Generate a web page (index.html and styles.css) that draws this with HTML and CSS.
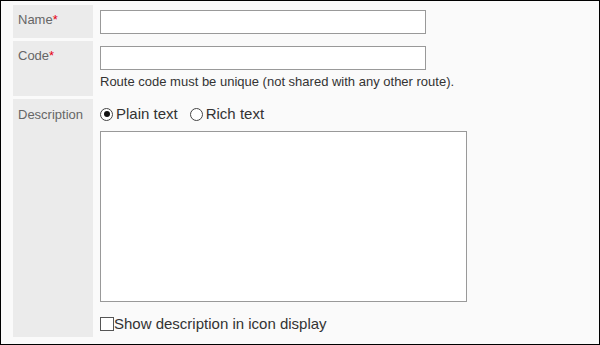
FILE: index.html
```html
<!DOCTYPE html>
<html>
<head>
<meta charset="utf-8">
<link rel="stylesheet" href="styles.css">
</head>
<body>
<div class="form">
  <div class="label row1">Name<span class="req">*</span></div>
  <div class="value row1"><input class="text" type="text"></div>

  <div class="label row2">Code<span class="req">*</span></div>
  <div class="value row2">
    <input class="text" type="text">
    <div class="help">Route code must be unique (not shared with any other route).</div>
  </div>

  <div class="label row3">Description</div>
  <div class="value row3">
    <div class="radios">
      <label class="opt"><span class="radio checked"></span>Plain text</label>
      <label class="opt"><span class="radio"></span>Rich text</label>
    </div>
    <textarea class="area"></textarea>
    <label class="check"><span class="box"></span>Show description in icon display</label>
  </div>
</div>
</body>
</html>
```

FILE: styles.css
```css
* { box-sizing: border-box; }
html, body { margin: 0; padding: 0; }
body {
  width: 600px;
  height: 345px;
  font-family: "Liberation Sans", Arial, sans-serif;
  color: #333;
}
.form {
  width: 600px;
  height: 345px;
  border: 1px solid #000;
  background: #fafafa;
  display: grid;
  grid-template-columns: 80px 1fr;
  grid-template-rows: 33px 55px 238px;
  row-gap: 3px;
  padding: 4px 0 0 12px;
  align-content: start;
}
.label {
  background: #ebebeb;
  color: #666;
  font-size: 13px;
  line-height: 15px;
  padding: 7px 0 0 5px;
}
.row3.label { padding-top: 8px; }
.req { color: #e60012; }
.value {
  padding: 5px 0 0 7px;
}
.text {
  display: block;
  width: 326px;
  height: 24px;
  border: 1px solid #999;
  background: #fff;
  margin: 0;
  padding: 0;
}
.help {
  font-size: 13px;
  line-height: 15px;
  margin-top: 4px;
  color: #333;
}
.radios {
  display: flex;
  align-items: center;
  font-size: 15px;
  line-height: 18px;
  color: #333;
  height: 18px;
  margin-top: 1px;
}
.opt { display: flex; align-items: center; margin-right: 12px; }
.radio {
  width: 13px;
  height: 13px;
  border: 1px solid #444;
  border-radius: 50%;
  background: #fff;
  margin: 0 3px 0 0;
  position: relative;
}
.radio.checked::after {
  content: "";
  position: absolute;
  left: 2.5px; top: 2.5px;
  width: 6px; height: 6px;
  border-radius: 50%;
  background: #111;
}
.area {
  display: block;
  width: 367px;
  height: 171px;
  margin: 8px 0 0 0;
  border: 1px solid #999;
  background: #fff;
  resize: none;
  padding: 0;
}
.check {
  display: flex;
  align-items: center;
  font-size: 15px;
  line-height: 18px;
  color: #333;
  margin-top: 13px;
}
.box {
  width: 14px;
  height: 14px;
  border: 1px solid #555;
  background: #fff;
  margin-right: 0;
}
```
